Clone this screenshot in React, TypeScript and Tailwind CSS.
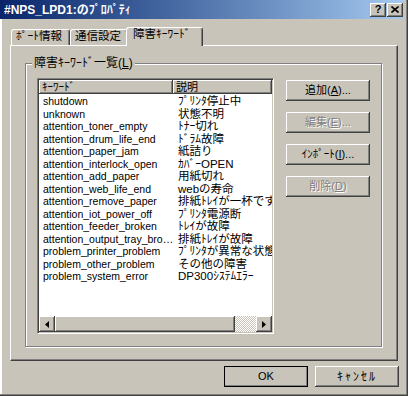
import clsx from "clsx";
import type { ReactNode } from "react";

const rows: [string, string][] = [
	["shutdown", "ﾌﾟﾘﾝﾀ停止中"],
	["unknown", "状態不明"],
	["attention_toner_empty", "ﾄﾅｰ切れ"],
	["attention_drum_life_end", "ﾄﾞﾗﾑ故障"],
	["attention_paper_jam", "紙詰り"],
	["attention_interlock_open", "ｶﾊﾞｰOPEN"],
	["attention_add_paper", "用紙切れ"],
	["attention_web_life_end", "webの寿命"],
	["attention_remove_paper", "排紙ﾄﾚｲが一杯です"],
	["attention_iot_power_off", "ﾌﾟﾘﾝﾀ電源断"],
	["attention_feeder_broken", "ﾄﾚｲが故障"],
	["attention_output_tray_bro…", "排紙ﾄﾚｲが故障"],
	["problem_printer_problem", "ﾌﾟﾘﾝﾀが異常な状態"],
	["problem_other_problem", "その他の障害"],
	["problem_system_error", "DP300ｼｽﾃﾑｴﾗｰ"],
];

// classic raised 3D bevel
const raised =
	"bg-[#c8c4ba] shadow-[inset_-1px_-1px_#404040,inset_1px_1px_#fff,inset_-2px_-2px_#808080]";

function Button({
	children,
	disabled,
	isDefault,
	className,
}: {
	children: ReactNode;
	disabled?: boolean;
	isDefault?: boolean;
	className?: string;
}) {
	return (
		<div
			className={clsx(
				"flex h-[21px] w-[84px] items-center justify-center text-[11px]",
				raised,
				isDefault && "outline outline-1 -outline-offset-1 outline-black",
				disabled && "text-[#808080] [text-shadow:1px_1px_#fff]",
				className,
			)}
		>
			{children}
		</div>
	);
}

function Tab({ children, active }: { children: ReactNode; active?: boolean }) {
	return (
		<div
			className={clsx(
				"flex items-start rounded-t-[3px] border-t border-l border-r border-t-white border-l-white border-r-[#404040] bg-[#c8c4ba] pt-[1px] text-[11.5px] shadow-[inset_-1px_0_#808080]",
				active
					? "relative z-10 -mb-[1px] -ml-[2px] h-[19px] w-[77px] pl-[6px]"
					: "h-[16px] pl-[4px]",
			)}
		>
			{children}
		</div>
	);
}

function Arrow({ dir }: { dir: "left" | "right" }) {
	return (
		<div className={clsx("flex h-[16px] w-[16px] items-center justify-center", raised)}>
			<svg width="4" height="7" viewBox="0 0 4 7">
				{dir === "left" ? (
					<polygon points="4,0 4,7 0,3.5" fill="#000" />
				) : (
					<polygon points="0,0 0,7 4,3.5" fill="#000" />
				)}
			</svg>
		</div>
	);
}

export default function App() {
	return (
		<div className="flex h-[396px] w-[408px] flex-col overflow-hidden bg-[#c8c4ba] font-['Liberation_Sans','Noto_Sans_CJK_JP',sans-serif] leading-none text-black shadow-[inset_-1px_-1px_#404040,inset_-2px_-2px_#808080,inset_2px_0_#fff]">
			{/* title bar */}
			<div className="flex h-[19px] w-[404px] items-center justify-between bg-gradient-to-r from-[#0a246a] to-[#a6caf0] pl-[4px] pr-[1px]">
				<span className="text-[12px] font-bold text-white">#NPS_LPD1:のﾌﾟﾛﾊﾟﾃｨ</span>
				<div className="flex gap-[1px]">
					<div className={clsx("flex h-[14px] w-[16px] items-center justify-center text-[11px] font-bold", raised)}>
						?
					</div>
					<div className={clsx("flex h-[14px] w-[16px] items-center justify-center", raised)}>
						<svg width="8" height="7" viewBox="0 0 8 7">
							<path d="M0.5 0.5 L7.5 6.5 M7.5 0.5 L0.5 6.5" stroke="#000" strokeWidth="1.6" />
						</svg>
					</div>
				</div>
			</div>

			{/* tabs */}
			<div className="mx-[10px] mt-[8px] flex h-[18px] items-end pl-[1px]">
				<div className="w-[59px]">
					<Tab>ﾎﾟｰﾄ情報</Tab>
				</div>
				<div className="w-[58px]">
					<Tab>通信設定</Tab>
				</div>
				<Tab active>障害ｷｰﾜｰﾄﾞ</Tab>
			</div>

			{/* tab panel */}
			<div className="mx-[10px] h-[316px] border border-t-white border-l-white border-r-[#404040] border-b-[#404040] pl-[14px] pt-[17px] shadow-[inset_-1px_-1px_#808080]">
				<div className="relative h-[284px] w-[357px] border border-[#808080] shadow-[inset_1px_1px_#fff,1px_1px_#fff]">
					<span className="absolute -top-[7px] left-[6px] bg-[#c8c4ba] px-[2px] text-[12px]">
						障害ｷｰﾜｰﾄﾞ一覧(<span className="underline">L</span>)
					</span>
					<div className="flex gap-[12px] pl-[11px] pt-[14px]">
						{/* list view */}
						<div className="flex h-[256px] w-[237px] flex-col border border-[#808080] border-r-white border-b-white p-[1px] shadow-[inset_1px_1px_#404040,inset_-1px_-1px_#c8c4ba]">
							<div className="flex h-[14px] text-[11px]">
								<div className={clsx("flex w-[134px] items-center pl-[3px]", raised)}>ｷｰﾜｰﾄﾞ</div>
								<div className={clsx("flex flex-1 items-center pl-[3px]", raised)}>説明</div>
							</div>
							<div className="flex-1 overflow-hidden bg-white pt-[1px]">
								{rows.map(([key, desc]) => (
									<div key={key} className="flex h-[12.5px] whitespace-nowrap">
										<div className="w-[134px] overflow-hidden pl-[4px] text-[10.5px] leading-[13px]">{key}</div>
										<div className="flex-1 overflow-hidden pl-[5px] text-[11.5px] leading-[12.5px]">{desc}</div>
									</div>
								))}
							</div>
							<div className="flex h-[16px]">
								<Arrow dir="left" />
								<div className={clsx("h-[16px] w-[180px]", raised)} />
								<div className="flex-1 bg-[repeating-conic-gradient(#fff_0_25%,#c8c4ba_0_50%)] bg-[length:2px_2px]" />
								<Arrow dir="right" />
							</div>
						</div>

						{/* action buttons */}
						<div className="flex flex-col gap-[11px] pt-[2px]">
							<Button>
								追加(<span className="underline">A</span>)...
							</Button>
							<Button disabled>
								編集(<span className="underline">E</span>)...
							</Button>
							<Button>
								ｲﾝﾎﾟｰﾄ(<span className="underline">I</span>)...
							</Button>
							<Button disabled>
								削除(<span className="underline">D</span>)
							</Button>
						</div>
					</div>
				</div>
			</div>

			{/* footer */}
			<div className="mt-[5px] flex justify-end gap-[7px] pr-[9px]">
				<Button isDefault>OK</Button>
				<Button className="text-[12px] tracking-[2px]">ｷｬﾝｾﾙ</Button>
			</div>
		</div>
	);
}
